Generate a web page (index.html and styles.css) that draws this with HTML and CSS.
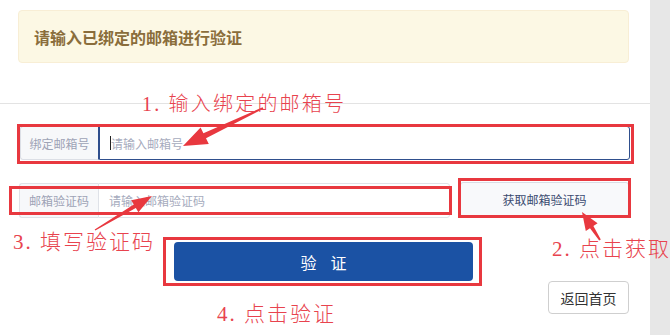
FILE: index.html
```html
<!DOCTYPE html>
<html lang="zh-CN">
<head>
<meta charset="utf-8">
<title>邮箱验证</title>
<link rel="stylesheet" href="styles.css">
</head>
<body>
<div class="page">
  <main class="main">
    <div class="alert">请输入已绑定的邮箱进行验证</div>
    <div class="divider"></div>
    <form class="form">
      <div class="input-group focused">
        <span class="addon">绑定邮箱号</span>
        <span class="field"><span class="caret"></span><span class="placeholder">请输入邮箱号</span></span>
      </div>
      <div class="code-row">
        <div class="input-group code-group">
          <span class="addon">邮箱验证码</span>
          <span class="field"><span class="placeholder">请输入邮箱验证码</span></span>
        </div>
        <button type="button" class="btn-get">获取邮箱验证码</button>
      </div>
      <button type="button" class="btn-verify">验证</button>
      <div class="back-row">
        <button type="button" class="btn-back">返回首页</button>
      </div>
    </form>
  </main>
  <aside class="strip"></aside>

  <div class="mark mark-1"></div>
  <div class="mark mark-2"></div>
  <div class="mark mark-3"></div>
  <div class="mark mark-4"></div>

  <svg class="arrows" width="670" height="335" viewBox="0 0 670 335">
    <polygon fill="#e8383f" points="262.6,107.3 203.4,133.2 200.6,127.4 183,146 208.8,144 206,138.2 263.4,108.7"/>
    <polygon fill="#e8383f" points="95.3,230.5 135.8,207.9 138.4,212.2 152,196 131.2,200.2 133.8,204.5 94.7,229.5"/>
    <polygon fill="#e8383f" points="600.8,239.6 593.4,226 597.6,223.3 582,212 585.8,230.9 590,228.2 599.2,240.4"/>
  </svg>

  <div class="note note-1">1. 输入绑定的邮箱号</div>
  <div class="note note-2">2. 点击获取</div>
  <div class="note note-3">3. 填写验证码</div>
  <div class="note note-4">4. 点击验证</div>
</div>
</body>
</html>
```

FILE: styles.css
```css
* { box-sizing: border-box; }

html, body {
  margin: 0;
  padding: 0;
  width: 670px;
  height: 335px;
  overflow: hidden;
  background: #ffffff;
  font-family: "Liberation Sans", "Noto Sans CJK SC", sans-serif;
}

.page {
  position: relative;
  display: flex;
  width: 670px;
  height: 335px;
}

.main {
  width: 650px;
  height: 335px;
  background: #ffffff;
  padding-top: 10px;
}

.strip {
  width: 20px;
  height: 335px;
  background: #e7e7e7;
}

.alert {
  margin-left: 18px;
  width: 611px;
  height: 53px;
  display: flex;
  align-items: center;
  padding: 0 15px;
  background: #fcf8e4;
  border: 1px solid #f8eed5;
  border-radius: 4px;
  color: #8a6d3b;
  font-size: 16px;
  font-weight: bold;
}

.divider {
  margin-top: 40px;
  height: 1px;
  background: #e3e3e3;
}

.form {
  padding: 0 20px 0 19px;
  display: flex;
  flex-direction: column;
}

.input-group {
  display: flex;
  height: 34px;
  font-size: 12px;
}

.input-group.focused {
  margin-top: 22px;
  margin-left: 1px;
}

.addon {
  width: 79px;
  display: flex;
  align-items: center;
  justify-content: center;
  background: #f7f8fa;
  color: #9ea3b6;
  border: 1px solid #dcdfe6;
  border-right: none;
  border-radius: 3px 0 0 3px;
}

.field {
  flex: 1;
  display: flex;
  align-items: center;
  padding-left: 10px;
  border: 1px solid #dcdfe6;
  border-radius: 0 3px 3px 0;
  background: #ffffff;
}

.focused .field {
  border-color: #2f4f8d;
}

.focused .addon {
  border-right: 1px solid #2f4f8d;
}

.caret {
  width: 1px;
  height: 14px;
  background: #222;
}

.placeholder {
  color: #a6abbd;
}

.code-row {
  margin-top: 23px;
  display: flex;
  align-items: flex-start;
}

.code-group {
  width: 431px;
  height: 35px;
}

.code-group .addon {
  border-color: #dfe2e8;
}

.code-group .field {
  border-color: #dfe2e8;
  border-left: 1px solid #dfe2e8;
}

.btn-get {
  margin-left: 10px;
  margin-top: -1px;
  width: 169px;
  height: 35px;
  background: #f8f9fb;
  border: 1px solid #d9dde5;
  border-radius: 3px;
  color: #3b4b70;
  font-family: inherit;
  font-size: 12px;
  padding: 0;
}

.btn-verify {
  margin: 24px 0 0 155px;
  width: 299px;
  height: 39px;
  background: #1b52a4;
  border: none;
  border-radius: 4px;
  color: #ffffff;
  font-family: inherit;
  font-size: 16px;
  letter-spacing: 14px;
  padding: 0 0 0 14px;
}

.back-row {
  display: flex;
  justify-content: flex-end;
  padding-right: 1px;
}

.btn-back {
  width: 81px;
  height: 33px;
  background: #ffffff;
  border: 1px solid #cfcfcf;
  border-radius: 4px;
  color: #333333;
  font-family: inherit;
  font-size: 14px;
  padding: 0;
}

/* annotation overlays */
.mark {
  position: absolute;
  border: 3px solid #e8383f;
}

.mark-1 { left: 17px; top: 124px; width: 617px; height: 40px; }
.mark-2 { left: 9px; top: 186px; width: 443px; height: 29px; }
.mark-3 { left: 458px; top: 178px; width: 173px; height: 40px; }
.mark-4 { left: 163px; top: 237px; width: 319px; height: 49px; }

.arrows {
  position: absolute;
  left: 0;
  top: 0;
  pointer-events: none;
}

.note {
  position: absolute;
  color: #e8434e;
  font-family: "Liberation Serif", "Noto Sans CJK SC", serif;
  font-weight: 300;
  font-size: 21px;
  line-height: 21px;
  letter-spacing: 2px;
  white-space: nowrap;
}

.note-1 { left: 142px; top: 94px; font-size: 20px; letter-spacing: 2.2px; }
.note-2 { left: 552px; top: 239px; }
.note-3 { left: 13px; top: 232px; }
.note-4 { left: 217px; top: 304px; }
```
